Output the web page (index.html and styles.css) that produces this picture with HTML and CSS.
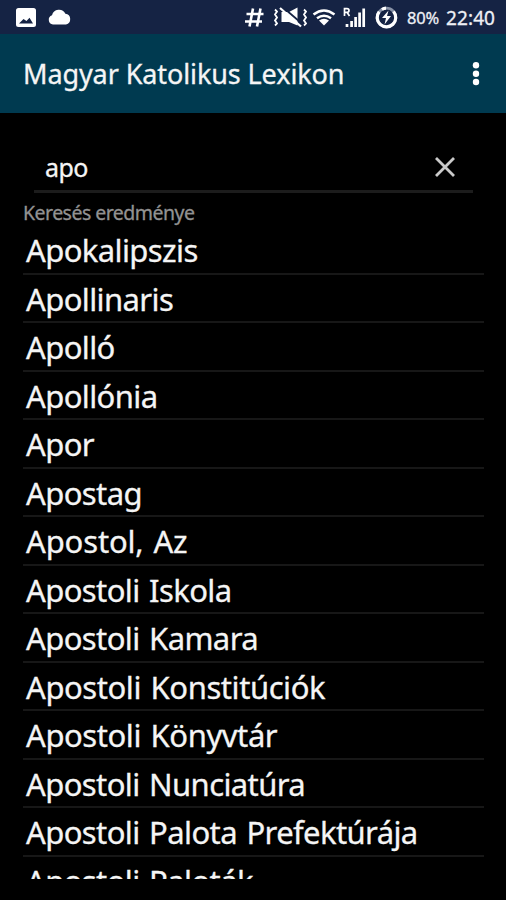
FILE: index.html
```html
<!DOCTYPE html>
<html lang="hu">
<head>
<meta charset="utf-8">
<title>Magyar Katolikus Lexikon</title>
<link rel="stylesheet" href="styles.css">
</head>
<body>
<div class="screen">
  <div class="status">
    <svg class="status-icons" width="80" height="34" viewBox="0 0 80 34" fill="#fff">
      <path fill-rule="evenodd" d="M18.500 8h15a2.500 2.500 0 0 1 2.500 2.500v14a2.500 2.500 0 0 1-2.500 2.500h-15a2.500 2.500 0 0 1-2.500-2.500v-14a2.500 2.500 0 0 1 2.500-2.500zM19 23.500h14l-3.500-5.700-3 3.300-3-2z"/>
      <path d="M53 24.500a4.800 4.800 0 0 1-1-9.300 7.200 7.200 0 0 1 13.400-1.500 5.500 5.500 0 0 1 .6 10.800z"/>
    </svg>
    <svg class="status-icons" width="160" height="34" viewBox="240 0 160 34" fill="none" stroke="#fff">
      <path stroke-width="2.600" d="M253 8.500l-3.500 18M260.500 8.500l-3.500 18M246.500 14h17M245 21.500h17"/>
      <path stroke-width="1.800" d="M275 9.500l2 2-2 3 2 3-2 3 2 3-2 2M304 9.500l2 2-2 3 2 3-2 3 2 3-2 2"/>
      <path fill="#fff" stroke="none" d="M281.500 12h7.500l8.500-4.500v18l-8.500-3.500h-7.500z"/>
      <path stroke="#152344" stroke-width="1.700" d="M282 6.500l21 18"/>
      <path stroke-width="2.200" d="M280 8l21 18.500"/>
      <path stroke-width="2.500" d="M313.500 14.500q10.500-8 21 0M317 18.300q7-5 14 0"/>
      <path fill="#fff" stroke="none" d="M319 20.500q5-3.500 10 0l-5 5z"/>
      <path stroke-width="1.700" d="M344.500 16V8.700h2.500q2 0 2 1.800t-2 1.800h-2.500M347 12.300l2.500 3.700"/>
      <path stroke-width="2.700" d="M347 27v-3M351.600 27v-6M355.600 27v-10M359.600 27v-14.500M363.700 27V8.500"/>
      <circle cx="386.500" cy="17.500" r="9.300" stroke="#8993a7" stroke-width="2.800"/>
      <path stroke-width="3.200" d="M393.500 11.500a9.300 9.300 0 1 1-14.300.2M382 9.500a9.300 9.300 0 0 1 4-1.300"/>
      <path fill="#fff" stroke="none" d="M388.500 10.500l-6.500 7.500h4l-1.500 6.500 6.500-8.500h-4z"/>
    </svg>
    <span class="battery">80%</span>
    <span class="clock">22:40</span>
  </div>
  <div class="appbar">
    <h1 class="title">Magyar Katolikus Lexikon</h1>
    <svg class="menu" width="12" height="28" viewBox="0 0 12 28" fill="#fff">
      <circle cx="6" cy="5.300" r="3.200"/><circle cx="6" cy="13.700" r="3.200"/><circle cx="6" cy="22" r="3.200"/>
    </svg>
  </div>
  <div class="search">
    <span class="query">apo</span>
    <svg class="clear" width="20" height="20" viewBox="0 0 20 20"><path d="M1 1l18 18M19 1L1 19" stroke="#cacaca" stroke-width="2.800"/></svg>
  </div>
  <div class="caption">Keresés eredménye</div>
  <div class="results">
    <div class="row">Apokalipszis</div>
    <div class="row">Apollinaris</div>
    <div class="row">Apolló</div>
    <div class="row">Apollónia</div>
    <div class="row">Apor</div>
    <div class="row">Apostag</div>
    <div class="row loose">Apostol, Az</div>
    <div class="row">Apostoli Iskola</div>
    <div class="row">Apostoli Kamara</div>
    <div class="row snug">Apostoli Konstitúciók</div>
    <div class="row snug">Apostoli Könyvtár</div>
    <div class="row">Apostoli Nunciatúra</div>
    <div class="row">Apostoli Palota Prefektúrája</div>
    <div class="row">Apostoli Paloták</div>
  </div>
</div>
</body>
</html>
```
FILE: styles.css
```css
* { box-sizing: border-box; }
body { margin: 0; background: #000; }
.screen {
  width: 506px;
  height: 900px;
  overflow: hidden;
  background: #000;
  color: #f5f5f5;
  font-family: "Noto Sans", sans-serif;
  -webkit-text-stroke: 0.3px currentColor;
}
.status {
  display: flex;
  height: 34px;
  background: #152344;
  color: #eef0f5;
  line-height: 36px;
  white-space: nowrap;
}
.status-icons { flex: none; }
.status-icons + .status-icons { margin-left: 160px; }
.battery { width: 39px; margin-left: 7px; font-size: 16.5px; letter-spacing: -0.2px; }
.clock { font-size: 19px; letter-spacing: 0.1px; }
.appbar {
  display: flex;
  align-items: center;
  justify-content: space-between;
  height: 79px;
  padding: 0 24px 0 23px;
  background: #003a50;
}
.title { margin: 0; font-size: 27px; font-weight: 400; line-height: 38px; letter-spacing: -0.1px; white-space: nowrap; }
.search {
  display: flex;
  justify-content: space-between;
  height: 50px;
  margin: 30px 33px 0 34px;
  padding: 0 18px 0 11px;
  border-bottom: 3px solid #1c1c1c;
}
.query { font-size: 25px; line-height: 48px; letter-spacing: -0.6px; }
.clear { margin-top: 14px; }
.caption { height: 33px; padding-left: 23px; color: #929292; font-size: 19.5px; line-height: 40px; letter-spacing: -0.53px; white-space: nowrap; }
.results { height: 653px; margin: 0 22px 0 23px; overflow: hidden; }
.row {
  height: 48.53px;
  padding-left: 3px;
  border-bottom: 2px solid #171717;
  font-size: 31px;
  line-height: 49px;
  letter-spacing: -0.6px;
  word-spacing: 2px;
  white-space: nowrap;
}
.loose { letter-spacing: -0.15px; }
.snug { letter-spacing: -0.43px; }
```
